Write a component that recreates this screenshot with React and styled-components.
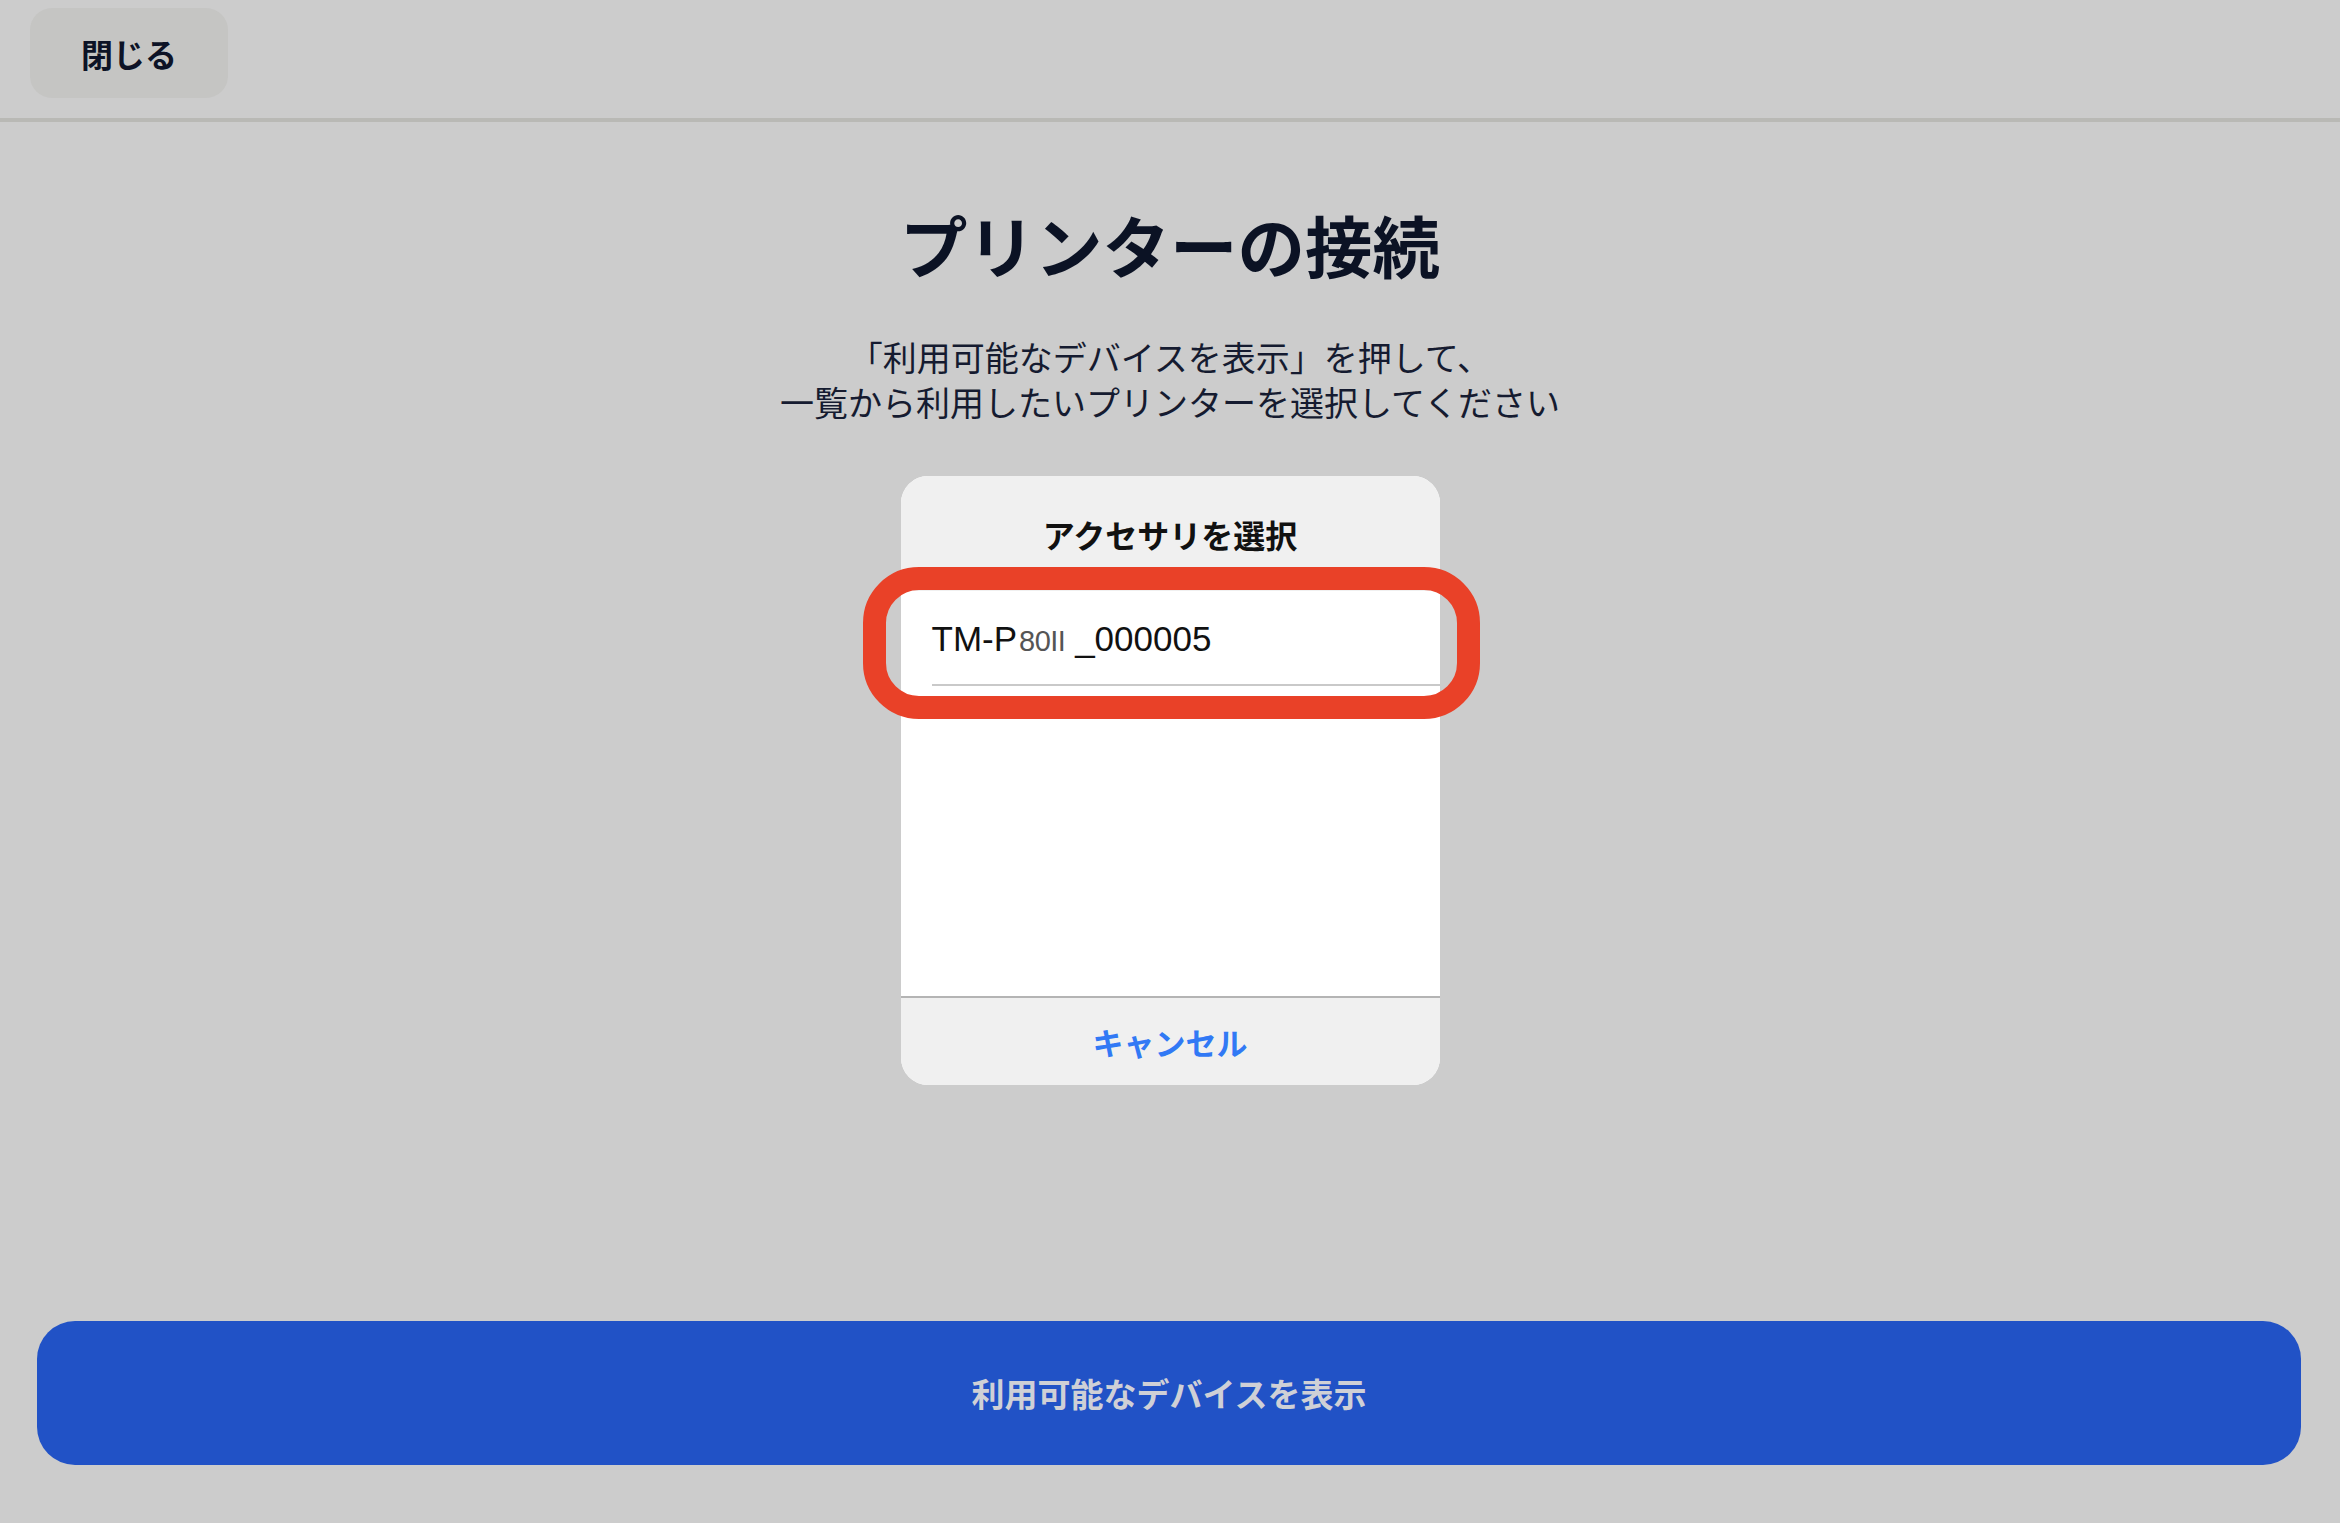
import styled, { createGlobalStyle } from 'styled-components';

const Global = createGlobalStyle`
  html, body {
    margin: 0;
    padding: 0;
    background: #cccccc;
  }
  body {
    font-family: "Noto Sans CJK JP", "Noto Sans", sans-serif;
    color: #0d1326;
  }
`

export default function App() {
  return (
    <>
      <Global />
      <Page>
        <TopBar>
          <CloseButton>閉じる</CloseButton>
        </TopBar>
        <Main>
          <Title>プリンターの接続</Title>
          <Lead>
            「利用可能なデバイスを表示」を押して、<br />
            一覧から利用したいプリンターを選択してください
          </Lead>
          <Dialog>
            <DialogHead>アクセサリを選択</DialogHead>
            <Row>
              <DeviceName>
                TM-P<Model>80II</Model> _000005
              </DeviceName>
              <Ring />
            </Row>
            <Empty />
            <Cancel>キャンセル</Cancel>
          </Dialog>
        </Main>
        <ShowButton>利用可能なデバイスを表示</ShowButton>
      </Page>
    </>
  )
}

const Page = styled.div`
  min-height: 100vh;
  display: flex;
  flex-direction: column;
`

const TopBar = styled.header`
  height: 122px;
  box-sizing: border-box;
  padding: 8px 30px 0;
  border-bottom: 4px solid #b9b9b5;
`

const CloseButton = styled.button`
  width: 198px;
  height: 90px;
  border: none;
  border-radius: 22px;
  background: #c5c5c3;
  font-family: "Noto Sans CJK JP", sans-serif;
  font-size: 32px;
  font-weight: 700;
  color: #0d1326;
  padding: 0;
`

const Main = styled.main`
  flex: 1;
  display: flex;
  flex-direction: column;
  align-items: center;
`

const Title = styled.h1`
  margin: 82px 0 0;
  font-size: 67.5px;
  line-height: 79px;
  font-weight: 700;
  color: #0b1224;
`

const Lead = styled.p`
  margin: 51px 0 0;
  font-size: 34px;
  line-height: 45px;
  font-weight: 400;
  text-align: center;
  color: #151b30;
`

const Dialog = styled.div`
  margin-top: 52px;
  width: 539px;
  display: flex;
  flex-direction: column;
  background: #ffffff;
  border-radius: 27px;
`

const DialogHead = styled.div`
  height: 115px;
  display: flex;
  align-items: center;
  justify-content: center;
  background: #f0f0f0;
  border-radius: 27px 27px 0 0;
  font-size: 32px;
  font-weight: 700;
  color: #111111;
`

const Row = styled.div`
  position: relative;
  height: 95px;
  display: flex;
  align-items: center;
  padding-left: 31px;
  &::after {
    content: "";
    position: absolute;
    left: 31px;
    right: 0;
    bottom: 0;
    height: 2px;
    background: #c9c9c9;
  }
`

const DeviceName = styled.span`
  font-family: "Liberation Sans", Arial, sans-serif;
  font-size: 35px;
  color: #111111;
  margin-top: 1px;
`

const Model = styled.span`
  font-size: 29px;
  letter-spacing: -0.5px;
  color: #555555;
  margin-left: 2px;
  margin-right: 0;
`

const Ring = styled.div`
  position: absolute;
  left: -38px;
  top: -24px;
  width: 617px;
  height: 152px;
  box-sizing: border-box;
  border: 23px solid #e94128;
  border-radius: 56px;
  pointer-events: none;
`

const Empty = styled.div`
  height: 310px;
`

const Cancel = styled.div`
  height: 87px;
  display: flex;
  align-items: center;
  justify-content: center;
  border-top: 2px solid #b4b4b4;
  background: #f0f0f0;
  border-radius: 0 0 27px 27px;
  font-size: 31px;
  font-weight: 700;
  color: #3179f5;
`

const ShowButton = styled.button`
  margin: 0 39px 58px 37px;
  height: 144px;
  border: none;
  border-radius: 38px;
  background: #2152c6;
  font-family: "Noto Sans CJK JP", sans-serif;
  font-size: 33px;
  font-weight: 700;
  color: #cfd0d6;
`
